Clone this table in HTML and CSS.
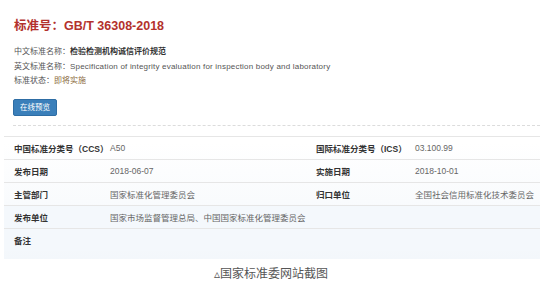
FILE: index.html
```html
<!DOCTYPE html>
<html lang="zh">
<head>
<meta charset="utf-8">
<link rel="stylesheet" href="styles.css">
</head>
<body>
<div class="panel">
  <div class="head">
    <h1 class="title">标准号：GB/T 36308-2018</h1>
    <div class="info"><span class="lab">中文标准名称：</span><b class="cn">检验检测机构诚信评价规范</b></div>
    <div class="info"><span class="lab">英文标准名称：</span><span class="en">Specification of integrity evaluation for inspection body and laboratory</span></div>
    <div class="info"><span class="lab">标准状态：</span><span class="status">即将实施</span></div>
    <div class="btnrow"><span class="btn">在线预览</span></div>
  </div>
  <div class="table">
    <div class="row">
      <div class="k">中国标准分类号（CCS）</div><div class="v">A50</div>
      <div class="k">国际标准分类号（ICS）</div><div class="v">03.100.99</div>
    </div>
    <div class="row">
      <div class="k">发布日期</div><div class="v">2018-06-07</div>
      <div class="k">实施日期</div><div class="v">2018-10-01</div>
    </div>
    <div class="row">
      <div class="k">主管部门</div><div class="v">国家标准化管理委员会</div>
      <div class="k">归口单位</div><div class="v">全国社会信用标准化技术委员会</div>
    </div>
    <div class="row tint">
      <div class="k">发布单位</div><div class="v wide">国家市场监督管理总局、中国国家标准化管理委员会</div>
    </div>
    <div class="row tint">
      <div class="k">备注</div><div class="v wide"></div>
    </div>
  </div>
</div>
<p class="caption">▵国家标准委网站截图</p>
</body>
</html>
```
FILE: styles.css
```css
* { box-sizing: border-box; }
body {
  margin: 0;
  background: #fff;
  font-family: "Liberation Sans", "Noto Sans CJK SC", sans-serif;
  color: #555;
}
.panel {
  margin-left: 4px;
  width: 536px;
  background: linear-gradient(#fff 0, #fff 55%, #f3f7fb 100%);
}
.head {
  padding: 18px 0 0 10px;
}
.title {
  margin: 0 0 10px;
  font-size: 12.5px;
  line-height: 17px;
  font-weight: bold;
  color: #b3312c;
}
.info {
  font-size: 8px;
  line-height: 14.5px;
  color: #555;
  white-space: nowrap;
}
.cn { color: #333; font-weight: bold; }
.en { color: #555; letter-spacing: 0.2px; }
.status { color: #8a6a3c; }
.btnrow {
  display: flex;
  padding: 10px 0 9px;
  border-bottom: 1px dashed #dcdcdc;
  margin-left: -1px;
}
.btn {
  display: block;
  background: #3a7fba;
  border: 1px solid #2e6da4;
  border-radius: 2px;
  color: #fff;
  font-size: 7.5px;
  line-height: 15px;
  padding: 0 6px;
}
.table {
  margin-top: 10px;
  padding-bottom: 8px;
}
.row {
  display: grid;
  grid-template-columns: 96px 206px 99px 1fr;
  height: 23px;
  align-items: center;
  border-top: 1px solid #e6e6e6;
  padding-left: 10px;
  font-size: 8.5px;
}
.row.tint { background: #f4f8fc; }
.k { color: #333; font-weight: bold; white-space: nowrap; }
.v { color: #666; white-space: nowrap; }
.v.wide { grid-column: 2 / 5; }
.caption {
  margin: 7px 0 0;
  text-align: center;
  font-size: 12px;
  line-height: 16px;
  color: #555;
  padding-right: 12px;
}
```
